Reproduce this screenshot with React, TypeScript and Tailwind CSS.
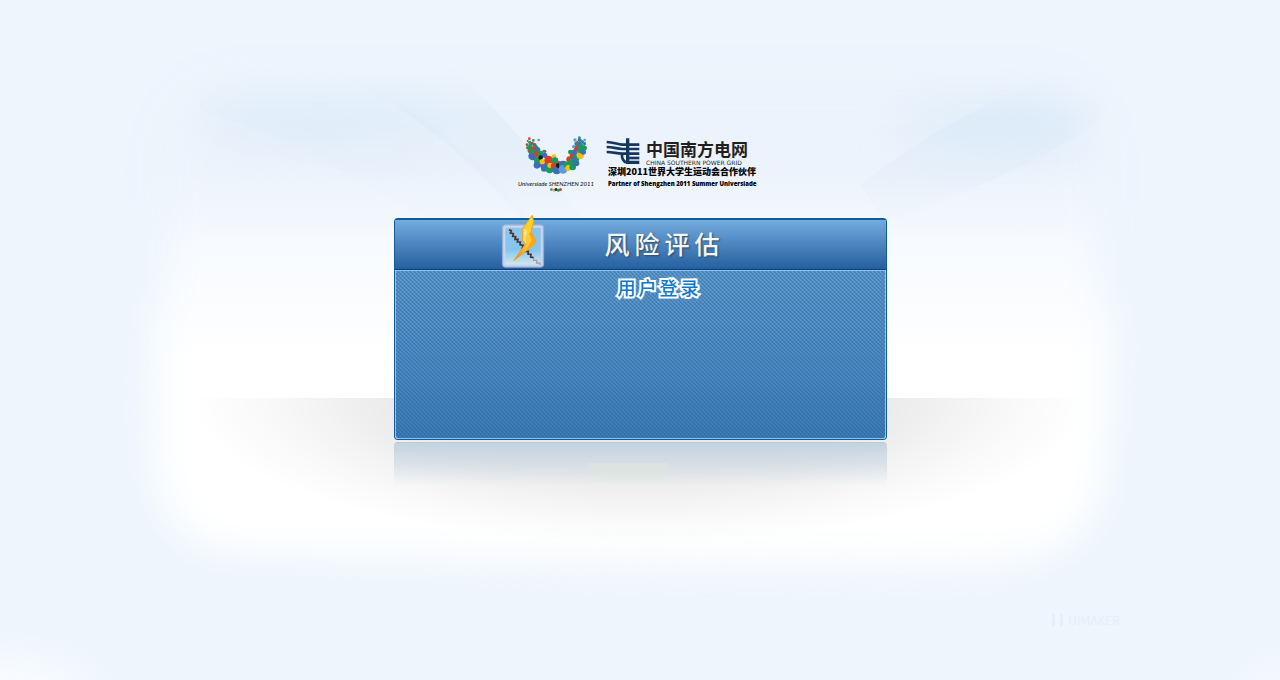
const COLORS = {
  r: "#e03a22",
  b: "#3f6db8",
  g: "#169b62",
  y: "#f5c30d",
  s: "#5f9bdc",
  k: "#14201f",
} as const;

type Dot = [number, number, number, keyof typeof COLORS];

const dots: Dot[] = [
  [57, 39, 4, "r"], [58, 50, 5, "g"], [52, 46, 3, "b"], [69, 44, 4, "g"], [85, 43, 4, "s"],
  [50, 57, 4, "r"], [60, 61, 7, "g"], [66, 53, 5, "r"], [73, 58, 6, "b"], [52, 66, 5, "g"],
  [63, 74, 11, "g"], [77, 66, 7, "g"], [56, 75, 4, "r"], [70, 68, 6, "r"], [83, 72, 7, "b"],
  [103, 77, 5, "r"], [67, 91, 13, "b"], [74, 80, 9, "g"], [80, 85, 9, "r"], [91, 84, 9, "g"],
  [103, 89, 8, "b"], [100, 76, 4, "g"], [83, 105, 12, "g"], [80, 119, 10, "b"], [91, 96, 7, "k"],
  [101, 117, 13, "b"], [96, 108, 8, "y"], [115, 103, 13, "r"], [131, 93, 7, "y"], [134, 105, 10, "g"],
  [101, 129, 9, "b"], [118, 130, 13, "g"], [119, 119, 8, "y"], [131, 121, 10, "r"], [139, 134, 12, "b"],
  [145, 119, 8, "k"], [158, 117, 12, "b"], [158, 131, 13, "s"], [169, 117, 10, "g"], [174, 127, 9, "y"],
  [187, 124, 10, "g"], [177, 101, 9, "r"], [186, 109, 11, "g"], [197, 112, 10, "b"], [187, 88, 9, "r"],
  [180, 79, 7, "g"], [193, 80, 9, "b"], [197, 98, 10, "g"], [210, 89, 11, "y"], [189, 99, 6, "b"],
  [200, 67, 9, "r"], [211, 73, 10, "g"], [219, 79, 8, "b"], [190, 63, 5, "s"], [198, 54, 6, "g"],
  [207, 56, 8, "b"], [215, 62, 9, "g"], [223, 67, 7, "g"], [221, 54, 6, "s"], [194, 43, 5, "s"],
  [208, 43, 6, "b"], [216, 48, 5, "g"], [223, 43, 4, "s"], [207, 36, 4, "g"], [223, 54, 4, "b"],
  [201, 48, 3, "r"], [149, 111, 4, "b"], [145, 109, 3, "r"],
];

function Backdrop() {
  return (
    <svg
      className="absolute inset-0 -z-10 h-full w-full"
      viewBox="0 0 1280 680"
      preserveAspectRatio="xMidYMin slice"
      aria-hidden="true"
    >
      <defs>
        <linearGradient id="sky" x1="0" y1="60" x2="0" y2="680" gradientUnits="userSpaceOnUse">
          <stop offset="0" stopColor="#e9f2fb" />
          <stop offset="0.18" stopColor="#ecf3fc" />
          <stop offset="0.3" stopColor="#f7fafe" />
          <stop offset="0.48" stopColor="#ffffff" />
          <stop offset="1" stopColor="#ffffff" />
        </linearGradient>
        <radialGradient id="floor" cx="640" cy="398" r="1" gradientUnits="userSpaceOnUse" gradientTransform="translate(640 398) scale(450 145) translate(-640 -398)">
          <stop offset="0" stopColor="#000" stopOpacity="0.1" />
          <stop offset="0.55" stopColor="#000" stopOpacity="0.08" />
          <stop offset="0.8" stopColor="#000" stopOpacity="0.03" />
          <stop offset="1" stopColor="#000" stopOpacity="0" />
        </radialGradient>
        <linearGradient id="ray" x1="0" y1="80" x2="0" y2="230" gradientUnits="userSpaceOnUse">
          <stop offset="0" stopColor="#d3e5f5" stopOpacity="0.1" />
          <stop offset="0.25" stopColor="#d3e5f5" stopOpacity="0.35" />
          <stop offset="1" stopColor="#dcebf8" stopOpacity="0.1" />
        </linearGradient>
        <filter id="soft" x="-20%" y="-20%" width="140%" height="140%">
          <feGaussianBlur stdDeviation="22" />
        </filter>
        <filter id="haze" x="-60%" y="-60%" width="220%" height="220%">
          <feGaussianBlur stdDeviation="24" />
        </filter>
        <mask id="glow">
          <rect x="165" y="85" width="935" height="465" rx="70" fill="#fff" filter="url(#soft)" />
        </mask>
      </defs>
      <rect width="1280" height="680" fill="#edf5fd" />
      <path d="M160 290Q125 520 200 530Q420 565 640 570L960 575Q1120 575 1112 300Z" fill="#fff" opacity="0.6" filter="url(#haze)" />
      <g mask="url(#glow)">
        <rect y="40" width="1280" height="640" fill="url(#sky)" />
        <ellipse cx="320" cy="115" rx="120" ry="30" fill="#dae9f7" opacity="0.6" filter="url(#haze)" />
        <ellipse cx="1010" cy="120" rx="110" ry="32" fill="#d9e9f7" opacity="0.6" filter="url(#haze)" />
        <path d="M200 80H360Q470 140 540 230H440Q320 150 200 110Z" fill="url(#ray)" opacity="0.5" />
        <path d="M350 80Q450 130 530 230H590Q530 140 455 70Z" fill="url(#ray)" />
        <path d="M1055 75Q940 120 860 185L885 222Q1060 160 1110 110V75Z" fill="url(#ray)" />
      </g>
      <rect x="190" y="398" width="900" height="150" fill="url(#floor)" />
      <ellipse cx="0" cy="695" rx="100" ry="35" fill="#fff" opacity="0.8" filter="url(#haze)" />
      <ellipse cx="1280" cy="695" rx="40" ry="30" fill="#fff" opacity="0.6" filter="url(#haze)" />
    </svg>
  );
}

function UniversiadeMark() {
  return (
    <svg className="h-[39px] w-[66px]" viewBox="38 31 198 117" aria-hidden="true">
      {dots.map(([x, y, r, c], i) => (
        <circle key={i} cx={x} cy={y} r={r} fill={COLORS[c]} />
      ))}
    </svg>
  );
}

function PowerGridMark() {
  return (
    <svg className="h-[26px] w-[34px]" viewBox="15 24 100 78" aria-hidden="true">
      <g fill="none" stroke="#14365f" strokeWidth="8">
        <path d="M16 36C35 37 47 42 62 44H114" />
        <path d="M16 51C35 51 47 56 62 57H114" />
        <path d="M16 66C35 66 47 71 62 71H114" />
        <path d="M79 25V97H114" strokeWidth="10" />
        <path d="M79 84H114" />
        <path d="M62 70V78Q62 90 74 98" />
      </g>
    </svg>
  );
}

function LightningIcon() {
  return (
    <svg className="h-[54px] w-11 shrink-0" viewBox="33 12 132 162" aria-hidden="true">
      <defs>
        <linearGradient id="tile" x1="0" y1="0" x2="0" y2="1">
          <stop offset="0" stopColor="#8cc4ea" />
          <stop offset="0.6" stopColor="#84c6ee" />
          <stop offset="1" stopColor="#d4e8ef" />
        </linearGradient>
        <linearGradient id="bolt" x1="1" y1="0" x2="0" y2="1">
          <stop offset="0" stopColor="#ffd91c" />
          <stop offset="0.55" stopColor="#fdc638" />
          <stop offset="0.8" stopColor="#f59a1d" />
          <stop offset="1" stopColor="#e8641a" />
        </linearGradient>
      </defs>
      <rect x="37" y="44" width="124" height="128" rx="9" fill="#a9bedd" stroke="#9db5d6" strokeWidth="2" />
      <rect x="43" y="50" width="112" height="116" rx="4" fill="url(#tile)" stroke="#cbd6ea" strokeWidth="6" />
      <path
        d="M57 59L64 62L61 69L70 71L68 79L77 80L75 88L84 88L82 96L91 96L90 104L99 106L97 114L106 116L107 124L115 124L114 132L123 133L122 141L131 143"
        fill="none"
        stroke="#4e302f"
        strokeWidth="5"
      />
      <path d="M131 143L131 151L140 151L140 159L149 159L151 165" fill="none" stroke="#a99da1" strokeWidth="4" />
      <path d="M127 16L99 54L97 90L106 103L71 152L133 104L138 92L123 67L131 35Z" fill="url(#bolt)" stroke="#f2a51b" strokeWidth="3" />
      <path d="M101 56L101 91L110 101L106 85L113 62Z" fill="#ffe37a" />
      <path d="M123 67L137 90L133 101L109 120L125 91L117 70Z" fill="#ef8f1c" opacity="0.6" />
    </svg>
  );
}

function SpacedText({ text }: { text: string }) {
  return (
    <>
      {Array.from(text).map((char, i) => (
        <span key={i}>{char}</span>
      ))}
    </>
  );
}

function Logos() {
  return (
    <div className="flex items-start gap-3 text-black">
      <div className="flex w-[76px] flex-col items-center pt-0.5">
        <UniversiadeMark />
        <p className="mt-1 font-['Lato',sans-serif] text-[6px] leading-[9px] font-medium whitespace-nowrap text-[#222] italic">
          Universiade SHENZHEN 2011
        </p>
        <svg className="h-1 w-3" viewBox="0 0 12 4" aria-hidden="true">
          <circle cx="1.5" cy="1.5" r="1.5" fill="#3f8fd8" />
          <circle cx="4" cy="2.3" r="1.5" fill="#f0bd10" />
          <circle cx="6" cy="1.5" r="1.5" fill="#222" />
          <circle cx="8.3" cy="2.3" r="1.5" fill="#169b62" />
          <circle cx="10.5" cy="1.5" r="1.5" fill="#e03a22" />
        </svg>
      </div>
      <div className="w-[156px] pt-1">
        <div className="flex items-start gap-1.5 text-[#231f20]">
          <PowerGridMark />
          <div className="pt-0.5">
            <p className="text-[17px] leading-[18px] font-bold whitespace-nowrap">中国南方电网</p>
            <p className="font-['DejaVu_Sans',sans-serif] text-[6px] leading-[9px] whitespace-nowrap">
              CHINA SOUTHERN POWER GRID
            </p>
          </div>
        </div>
        <p className="pl-0.5 text-[9px] leading-[10px] font-black whitespace-nowrap">深圳2011世界大学生运动会合作伙伴</p>
        <p className="pl-0.5 font-['Open_Sans',sans-serif] text-[6px] leading-[14px] font-extrabold whitespace-nowrap">
          Partner of Shengzhen 2011 Summer Universiade
        </p>
      </div>
    </div>
  );
}

export default function App() {
  return (
    <main className="relative isolate flex min-h-screen flex-col items-center overflow-hidden px-4 pt-[134px] font-['Noto_Sans_CJK_SC',sans-serif]">
      <Backdrop />
      <div className="h-[84px]">
        <Logos />
      </div>
      <section className="w-full max-w-[493px] rounded border border-t-2 border-[#0f5c9f]">
        <header className="flex h-[50px] items-end gap-[60px] border-b border-[#0b3d7c] bg-linear-to-b from-[#74acdf] to-[#245f9f] pb-px pl-[106px]">
          <LightningIcon />
          <h1 className="flex gap-[5px] pb-1.5 text-[25px] leading-[38px] font-medium text-[#f3f6fa] [text-shadow:1px_1px_2px_#33465d]">
            <SpacedText text="风险评估" />
          </h1>
        </header>
        <div className="h-[169px] rounded-b-[3px] border border-[#8ec4ee] bg-[linear-gradient(45deg,#1c568f4d_25%,transparent_25%,transparent_50%,#1c568f4d_50%,#1c568f4d_75%,transparent_75%),linear-gradient(-45deg,#1c568f26_25%,transparent_25%,transparent_50%,#1c568f26_50%,#1c568f26_75%,transparent_75%),linear-gradient(to_bottom,#629ecf,#4f8cc4_60%,#3f7eb8)] bg-size-[4px_4px,4px_4px,100%_100%] pt-0.5 pl-[222px]">
          <h2 className="flex gap-[3px] text-lg leading-7 font-medium text-[#0b79d0] [-webkit-text-stroke:4px_white] [paint-order:stroke_fill]">
            <SpacedText text="用户登录" />
          </h2>
        </div>
      </section>
      <div className="mt-0.5 flex h-11 w-full max-w-[493px] justify-center rounded-t border-t border-[#c0c9d2] bg-linear-to-b from-[#c3d3e1] to-[#fafafa]/0" aria-hidden="true">
        <div className="mt-5 mr-6 h-5 w-20 bg-linear-to-b from-[#dde7dd]/70 to-transparent" />
      </div>
      <p className="mt-[126px] flex w-full max-w-[960px] items-center justify-end gap-1 text-[12px] leading-4 text-[#e5eef9]">
        <svg className="h-3 w-3" viewBox="0 0 12 12" fill="currentColor" aria-hidden="true">
          <path d="M0 0h3v3H0zM0 4h3v8H0zM8 0h3v3H8zM8 4h3v8H8z" />
        </svg>
        UIMAKER
      </p>
    </main>
  );
}
